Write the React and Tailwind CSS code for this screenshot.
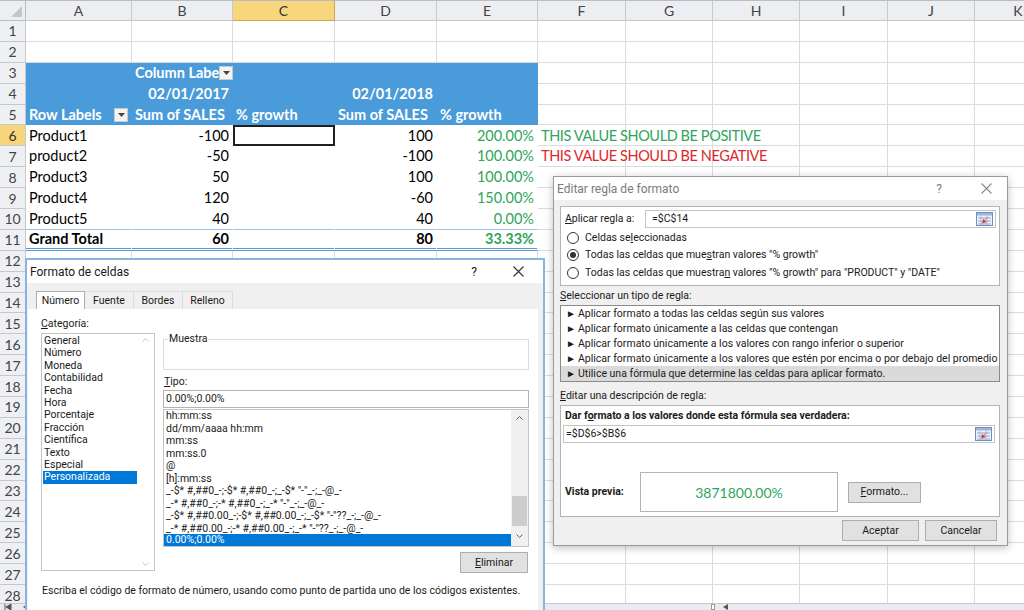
import React from "react";

const COLS = [
  ["A", "w-[106px]"],
  ["B", "w-[101px]"],
  ["C", "w-[102px]"],
  ["D", "w-[102px]"],
  ["E", "w-[101px]"],
  ["F", "w-[88px]"],
  ["G", "w-[87px]"],
  ["H", "w-[87px]"],
  ["I", "w-[88px]"],
  ["J", "w-[87px]"],
  ["K", "w-[87px]"],
];

const TONES = {
  grid: "border-r border-b border-[#dadcdd] bg-white",
  blue: "border-r border-b border-[#4a9bd9] bg-[#4a9bd9] text-white font-bold",
  plain: "border-r border-b border-white bg-white",
  line: "border-r border-b border-r-white border-b-[#9bc2e6] bg-white",
  total: "border-r border-b-[3px] border-double border-r-white border-b-[#5b9bd5] bg-white font-bold",
  sel: "border-2 border-[#1f1f1f] bg-white",
};

const GREEN = "text-[#2fa55a]";

function DropBtn() {
  return (
    <span className="w-[14px] h-[14px] shrink-0 bg-[#f4f4f4] border border-[#c9c9c9] flex items-center justify-center">
      <svg width="7" height="4" viewBox="0 0 7 4">
        <path d="M0 0h7L3.5 4z" fill="#444" />
      </svg>
    </span>
  );
}

// row specs: tone for A-E, then cell contents
const pivot = { tone: "blue" };
const body = { tone: "plain" };

const ROWS = [
  {},
  {},
  {
    ...pivot,
    B: {
      c: (
        <>
          <span className="flex-1">Column Labe</span>
          <DropBtn />
        </>
      ),
    },
  },
  { ...pivot, B: { c: "02/01/2017", r: true }, D: { c: "02/01/2018", r: true } },
  {
    ...pivot,
    A: {
      c: (
        <>
          <span className="flex-1">Row Labels</span>
          <DropBtn />
        </>
      ),
    },
    B: { c: "Sum of SALES" },
    C: { c: "% growth" },
    D: { c: "Sum of SALES" },
    E: { c: "% growth" },
  },
  {
    ...body,
    hl: true,
    A: { c: "Product1" },
    B: { c: "-100", r: true },
    C: { c: "", t: "sel" },
    D: { c: "100", r: true },
    E: { c: "200.00%", r: true, x: GREEN },
    F: { c: "THIS VALUE SHOULD BE POSITIVE", x: `${GREEN} relative z-10 tracking-[-0.4px]` },
  },
  {
    ...body,
    A: { c: "product2" },
    B: { c: "-50", r: true },
    D: { c: "-100", r: true },
    E: { c: "100.00%", r: true, x: GREEN },
    F: { c: "THIS VALUE SHOULD BE NEGATIVE", x: "text-[#e0262b] relative z-10 tracking-[-0.4px]" },
  },
  {
    ...body,
    A: { c: "Product3" },
    B: { c: "50", r: true },
    D: { c: "100", r: true },
    E: { c: "100.00%", r: true, x: GREEN },
  },
  {
    ...body,
    A: { c: "Product4" },
    B: { c: "120", r: true },
    D: { c: "-60", r: true },
    E: { c: "150.00%", r: true, x: GREEN },
  },
  {
    tone: "line",
    A: { c: "Product5" },
    B: { c: "40", r: true },
    D: { c: "40", r: true },
    E: { c: "0.00%", r: true, x: GREEN },
  },
  {
    tone: "total",
    A: { c: "Grand Total" },
    B: { c: "60", r: true },
    D: { c: "80", r: true },
    E: { c: "33.33%", r: true, x: GREEN },
  },
];
while (ROWS.length < 28) ROWS.push({});

function Row({ n, spec }) {
  return (
    <div className="flex h-[20.9px]">
      <div
        className={
          spec.hl
            ? "w-[26px] shrink-0 border-r border-b border-[#c5c8cc] bg-[#f7d57a] flex items-center justify-center text-[14px] text-[#333]"
            : "w-[26px] shrink-0 border-r border-b border-[#c5c8cc] bg-[#eef0f3] flex items-center justify-center text-[14px] text-[#444]"
        }
      >
        {n}
      </div>
      {COLS.map(([k, w], i) => {
        const cell = spec[k] || {};
        const tone = cell.t || (i < 5 && spec.tone) || "grid";
        return (
          <div
            key={k}
            className={`${w} shrink-0 h-full box-border flex items-center px-[3px] whitespace-nowrap ${TONES[tone]} ${
              cell.r ? "justify-end" : ""
            } ${cell.x || ""}`}
          >
            {cell.c}
          </div>
        );
      })}
    </div>
  );
}

function HeaderRow() {
  return (
    <div className="flex h-[21px] border-t border-[#b9bcc1]">
      <div className="w-[26px] shrink-0 border-r border-b border-[#b9bcc1] bg-[#eceef1] flex items-end justify-end p-[3px]">
        <svg width="11" height="11" viewBox="0 0 11 11">
          <path d="M11 0V11H0z" fill="#c3c6ca" />
        </svg>
      </div>
      {COLS.map(([k, w]) =>
        k === "C" ? (
          <div
            key={k}
            className={`${w} shrink-0 border-r border-b border-[#c9a94f] bg-[#f8d77c] flex items-center justify-center text-[14px] text-[#333]`}
          >
            {k}
          </div>
        ) : (
          <div
            key={k}
            className={`${w} shrink-0 border-r border-b border-[#c5c8cc] bg-[#eceef1] flex items-center justify-center text-[14px] text-[#444]`}
          >
            {k}
          </div>
        )
      )}
    </div>
  );
}

function CloseX({ color = "#333" }) {
  return (
    <svg width="11" height="11" viewBox="0 0 11 11">
      <path d="M0.5 0.5l10 10M10.5 0.5l-10 10" stroke={color} strokeWidth="1.1" />
    </svg>
  );
}

function RangeIcon() {
  return (
    <svg width="17" height="14" viewBox="0 0 17 14">
      <rect x="0.5" y="0.5" width="16" height="13" fill="#eef3fa" stroke="#6f8fbf" />
      <rect x="1" y="1" width="15" height="2.5" fill="#9db5da" />
      <path d="M2 6h13M2 9h13M2 12h13" stroke="#6f8fbf" strokeWidth="0.8" />
      <path d="M5 3.5v9M11 3.5v9" stroke="#9db5da" strokeWidth="0.8" />
      <path d="M12.5 4l-4 4.5L7.5 6.5 6 11.5l5-1.5-2-1z" fill="#e2332b" />
    </svg>
  );
}

function Btn({ children, w }) {
  return (
    <div className={`${w} h-[21px] bg-[#e1e1e1] border border-[#adadad] flex items-center justify-center`}>
      {children}
    </div>
  );
}

const CATS = [
  "General",
  "Número",
  "Moneda",
  "Contabilidad",
  "Fecha",
  "Hora",
  "Porcentaje",
  "Fracción",
  "Científica",
  "Texto",
  "Especial",
];

const TYPES = [
  "hh:mm:ss",
  "dd/mm/aaaa hh:mm",
  "mm:ss",
  "mm:ss.0",
  "@",
  "[h]:mm:ss",
  '_-$* #,##0_-;-$* #,##0_-;_-$* "-"_-;_-@_-',
  '_-* #,##0_-;-* #,##0_-;_-* "-"_-;_-@_-',
  '_-$* #,##0.00_-;-$* #,##0.00_-;_-$* "-"??_-;_-@_-',
  '_-* #,##0.00_-;-* #,##0.00_-;_-* "-"??_-;_-@_-',
];

function FormatCells() {
  return (
    <div className="absolute left-[25px] top-[258px] w-[520px] h-[360px] bg-[#f0f0f0] border-2 border-[#86b4e3] font-['Roboto',sans-serif] text-[10.5px] text-[#1a1a1a] flex flex-col">
      <div className="h-[23px] shrink-0 bg-white flex items-center pl-[3px] pr-[19px]">
        <span className="flex-1 text-[12px]">Formato de celdas</span>
        <span className="text-[12px] mr-[36px]">?</span>
        <CloseX />
      </div>
      <div className="h-[26px] shrink-0 flex items-end pl-[9px]">
        <div className="w-[49px] h-[18px] bg-white border border-b-0 border-[#adadad] flex items-center justify-center">
          Número
        </div>
        <div className="w-[49px] h-[18px] border-r border-t border-[#dcdcdc] flex items-center justify-center">
          Fuente
        </div>
        <div className="w-[49px] h-[18px] border-r border-t border-[#dcdcdc] flex items-center justify-center">
          Bordes
        </div>
        <div className="w-[50px] h-[18px] border-r border-t border-[#dcdcdc] flex items-center justify-center">
          Relleno
        </div>
      </div>
      <div className="flex-1 bg-white ml-[1px] mr-[5px] pl-[13px] flex flex-col">
        <div className="flex">
          <div className="w-[114px] shrink-0">
            <div className="mt-[8px] leading-[14px]">
              <u>C</u>ategoría:
            </div>
            <div className="mt-[2px] h-[238px] border border-[#c4c4c4] flex">
              <div className="flex-1 pt-[1px] pl-[1px] leading-[12.4px]">
                {CATS.map((c) => (
                  <div key={c} className="pl-[1px]">
                    {c}
                  </div>
                ))}
                <div className="pl-[1px] bg-[#0078d7] text-white">Personalizada</div>
              </div>
              <div className="w-[17px] flex flex-col items-center justify-between py-[4px]">
                <svg width="7" height="4" viewBox="0 0 7 4">
                  <path d="M0.5 3.5l3-3 3 3" stroke="#c4c4c4" fill="none" />
                </svg>
                <svg width="7" height="4" viewBox="0 0 7 4">
                  <path d="M0.5 0.5l3 3 3-3" stroke="#c4c4c4" fill="none" />
                </svg>
              </div>
            </div>
          </div>
          <div className="w-[366px] ml-[8px] flex flex-col">
            <fieldset className="mt-[24px] h-[37px] border border-[#dcdcdc] pl-[4px]">
              <legend className="px-[1px] leading-[12px]">Muestra</legend>
            </fieldset>
            <div className="mt-[5px] leading-[14px] pl-[1px]">
              <u>T</u>ipo:
            </div>
            <div className="mt-[1px] h-[18px] border border-[#b4b4b4] flex items-center px-[2px]">0.00%;0.00%</div>
            <div className="mt-[1px] h-[138px] border border-[#c4c4c4] flex">
              <div className="flex-1 overflow-hidden leading-[12.5px]">
                {TYPES.map((t) => (
                  <div key={t} className="pl-[2px] whitespace-pre h-[12.5px]">
                    {t}
                  </div>
                ))}
                <div className="pl-[2px] bg-[#0078d7] text-white h-[12.5px] -mt-[1px]">0.00%;0.00%</div>
              </div>
              <div className="w-[17px] bg-[#f0f0f0] flex flex-col items-center">
                <svg className="mt-[6px]" width="7" height="4" viewBox="0 0 7 4">
                  <path d="M0.5 3.5l3-3 3 3" stroke="#606060" fill="none" />
                </svg>
                <div className="mt-[76px] w-[15px] h-[30px] bg-[#cdcdcd]" />
                <svg className="mt-[8px]" width="7" height="4" viewBox="0 0 7 4">
                  <path d="M0.5 0.5l3 3 3-3" stroke="#606060" fill="none" />
                </svg>
              </div>
            </div>
            <div className="mt-[5px] self-end mr-[1px]">
              <Btn w="w-[68px]">
                <span>
                  <u>E</u>liminar
                </span>
              </Btn>
            </div>
          </div>
        </div>
        <div className="mt-[11px] pl-[1px] leading-[14px]">
          Escriba el código de formato de número, usando como punto de partida uno de los códigos existentes.
        </div>
      </div>
    </div>
  );
}

function Radio({ on }) {
  return (
    <span className="w-[12px] h-[12px] shrink-0 rounded-full border border-[#333] bg-white flex items-center justify-center">
      {on && <span className="w-[6px] h-[6px] rounded-full bg-[#333]" />}
    </span>
  );
}

const RULES = [
  "Aplicar formato a todas las celdas según sus valores",
  "Aplicar formato únicamente a las celdas que contengan",
  "Aplicar formato únicamente a los valores con rango inferior o superior",
  "Aplicar formato únicamente a los valores que estén por encima o por debajo del promedio",
];

function EditRule() {
  return (
    <div className="absolute left-[553px] top-[176px] w-[455px] h-[370px] bg-[#f0f0f0] border border-[#9a9a9a] shadow-[0_2px_8px_rgba(0,0,0,0.25)] font-['Roboto',sans-serif] text-[10.5px] text-[#1a1a1a] flex flex-col">
      <div className="h-[23px] shrink-0 bg-white flex items-center pl-[3px] pr-[15px] text-[#7a7a7a]">
        <span className="flex-1 text-[12px]">Editar regla de formato</span>
        <span className="text-[12px] mr-[39px]">?</span>
        <CloseX color="#888" />
      </div>
      <div className="pl-[6px] pr-[7px] flex flex-col">
        <div className="mt-[6px] h-[80px] w-[440px] bg-white border border-[#b4b4b4] flex flex-col">
          <div className="mt-[3px] h-[18px] flex items-center">
            <span className="w-[84px] pl-[4px]">
              <u>A</u>plicar regla a:
            </span>
            <div className="w-[351px] h-[18px] border border-[#c4c4c4] flex items-center pl-[6px] pr-[2px]">
              <span className="flex-1">=$C$14</span>
              <RangeIcon />
            </div>
          </div>
          <div className="mt-[1px] h-[17.5px] flex items-center gap-[6px] pl-[6px]">
            <Radio />
            <span>
              Celdas se<u>l</u>eccionadas
            </span>
          </div>
          <div className="h-[17.5px] flex items-center gap-[6px] pl-[6px]">
            <Radio on />
            <span>
              Todas las celdas que mue<u>s</u>tran valores "% growth"
            </span>
          </div>
          <div className="h-[17.5px] flex items-center gap-[6px] pl-[6px]">
            <Radio />
            <span>
              Todas las celdas que muestra<u>n</u> valores "% growth" para "PRODUCT" y "DATE"
            </span>
          </div>
        </div>
        <div className="mt-[3px] leading-[14px]">
          <u>S</u>eleccionar un tipo de regla:
        </div>
        <div className="mt-[2px] h-[77px] w-[440px] bg-white border border-[#8a8a8a] leading-[15px]">
          {RULES.map((r) => (
            <div key={r} className="flex pl-[5px] whitespace-nowrap">
              <span className="w-[12px] text-[10px]">►</span>
              <span>{r}</span>
            </div>
          ))}
          <div className="flex pl-[5px] bg-[#dadada] whitespace-nowrap">
            <span className="w-[12px] text-[10px]">►</span>
            <span>Utilice una fórmula que determine las celdas para aplicar formato.</span>
          </div>
        </div>
        <div className="mt-[7px] leading-[14px]">
          <u>E</u>ditar una descripción de regla:
        </div>
        <div className="mt-[2px] h-[112px] w-[440px] bg-white border border-[#b4b4b4] flex flex-col">
          <div className="mt-[3px] pl-[4px] leading-[14px] font-bold">
            Dar f<u>o</u>rmato a los valores donde esta fórmula sea verdadera:
          </div>
          <div className="mt-[2px] ml-[2px] w-[432px] h-[18px] border border-[#c4c4c4] flex items-center pl-[2px] pr-[2px]">
            <span className="flex-1">=$D$6&gt;$B$6</span>
            <RangeIcon />
          </div>
          <div className="mt-[29px] h-[40px] flex items-center">
            <span className="w-[79px] pl-[4px] font-bold">Vista previa:</span>
            <div className={`w-[198px] h-[40px] border border-[#b4b4b4] flex items-center justify-center font-['Lato',sans-serif] text-[14px] ${GREEN}`}>
              3871800.00%
            </div>
            <div className="ml-[10px]">
              <Btn w="w-[73px]">
                <span>
                  <u>F</u>ormato...
                </span>
              </Btn>
            </div>
          </div>
        </div>
        <div className="mt-[3px] flex justify-end gap-[6px] pr-[3px]">
          <Btn w="w-[77px]">Aceptar</Btn>
          <Btn w="w-[72px]">Cancelar</Btn>
        </div>
      </div>
    </div>
  );
}

function BottomBar() {
  return (
    <div className="h-[7px] shrink-0 bg-[#e8ebef] border-t border-[#c5c8cc] flex items-end">
      <svg className="ml-[4px]" width="8" height="6" viewBox="0 0 8 6">
        <path d="M1 0v6M7 0L2 3l5 3z" stroke="#555" fill="#555" strokeWidth="1" />
      </svg>
      <svg className="ml-[9px]" width="8" height="6" viewBox="0 0 8 6">
        <path d="M7 0L2 3l5 3z" fill="#555" />
      </svg>
      <div className="ml-[682px] w-[4px] h-[6px] bg-white border border-[#999]" />
      <svg className="ml-[6px]" width="8" height="6" viewBox="0 0 8 6">
        <path d="M7 0L2 3l5 3z" fill="#555" />
      </svg>
    </div>
  );
}

export default function App() {
  return (
    <div className="relative w-[1024px] h-[610px] overflow-hidden bg-white font-['Lato',sans-serif] text-[14.5px] text-black">
      <div className="flex flex-col h-full">
        <div className="h-[603px] overflow-hidden">
          <HeaderRow />
          {ROWS.map((r, i) => (
            <Row key={i} n={i + 1} spec={r} />
          ))}
        </div>
        <BottomBar />
      </div>
      <FormatCells />
      <EditRule />
    </div>
  );
}
